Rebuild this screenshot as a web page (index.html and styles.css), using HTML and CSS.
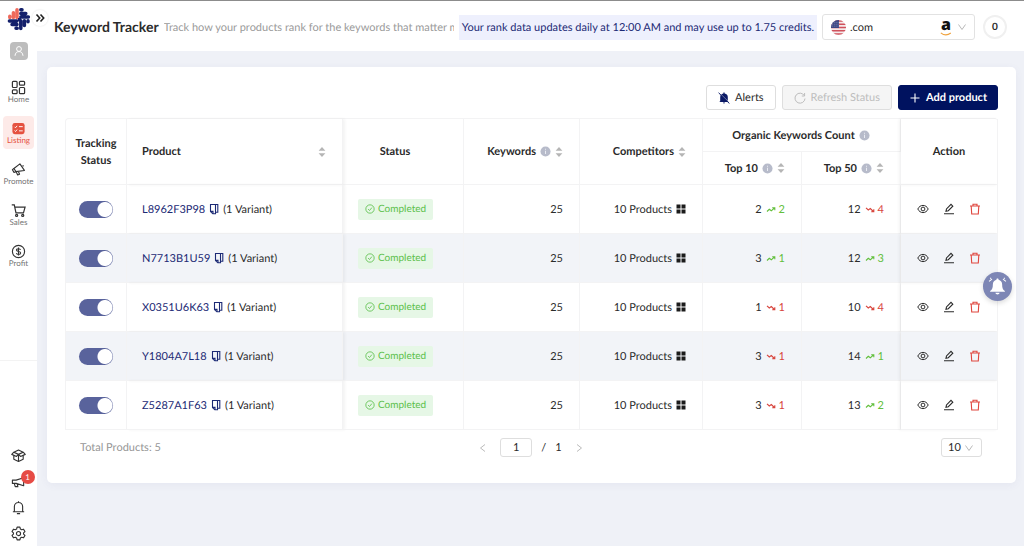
FILE: index.html
```html
<!DOCTYPE html>
<html lang="en">
<head>
<meta charset="utf-8">
<meta name="viewport" content="width=device-width, initial-scale=1">
<title>Keyword Tracker</title>
<link rel="stylesheet" href="styles.css">
</head>
<body>
<svg class="sprite" aria-hidden="true">
  <symbol id="i-copy" viewBox="0 0 10 12"><path d="M1.500 1.500h5v9.300H3.800L1.500 8.600zM6.500 1.500h2.300v7.700H6.500M1.500 8.400h2.500v2.400" fill="none" stroke="currentColor" stroke-width="1.100"/></symbol>
  <symbol id="i-info" viewBox="0 0 12 12"><circle cx="6" cy="6" r="5.500" fill="#b7bbca"/><path d="M6 5.200v3.600M6 3v1.200" stroke="#e9ebf2" stroke-width="1.100"/></symbol>
  <symbol id="i-sort" viewBox="0 0 8 12"><path d="M4 1 7.400 4.800H.6zM4 11 7.400 7.200H.6z" fill="#b5b5b5"/></symbol>
  <symbol id="i-check" viewBox="0 0 12 12"><g fill="none" stroke="currentColor" stroke-width="1"><circle cx="6" cy="6" r="5"/><path d="M3.700 6.100 5.400 7.800 8.300 4.300"/></g></symbol>
  <symbol id="i-grid" viewBox="0 0 10 10"><path d="M.5.5h4v4h-4zM5.500.5h4v4h-4zM.5 5.500h4v4h-4zM5.500 5.500h4v4h-4z" fill="#1b1b1b"/></symbol>
  <symbol id="i-up" viewBox="0 0 10 8"><path d="M1 6.500 3.300 4.300l2 1.500L8.400 3M6.200 2.800h2.600v2.400" fill="none" stroke="currentColor" stroke-width="1.100"/></symbol>
  <symbol id="i-down" viewBox="0 0 10 8"><path d="M1 2.800 3.300 5l2-1.500L8.400 6.500M6.200 6.700h2.600V4.300" fill="none" stroke="currentColor" stroke-width="1.100"/></symbol>
  <symbol id="i-eye" viewBox="0 0 12 12"><g fill="none" stroke="currentColor"><path d="M.8 6C2 3.600 3.800 2.400 6 2.400S10 3.600 11.200 6C10 8.400 8.200 9.600 6 9.600S2 8.400.8 6z"/><circle cx="6" cy="6" r="1.900"/></g></symbol>
  <symbol id="i-edit" viewBox="0 0 12 12"><path d="M3 8.200 3.500 5.900 8 1.400l1.800 1.800-4.500 4.500zM1 10.700h10" fill="none" stroke="currentColor" stroke-width="1.100"/></symbol>
  <symbol id="i-trash" viewBox="0 0 12 12"><path d="M1 3h10M4 3V1.300h4V3M2.200 3l.5 8h6.600l.5-8" fill="none" stroke="currentColor" stroke-width="1.100"/></symbol>
  <symbol id="i-chev" viewBox="0 0 10 10"><path d="M1.500 2.500 5 7.500l3.500-5" fill="none" stroke="#b9b9b9" stroke-width="1"/></symbol>
</svg>

<div class="app">
  <aside class="sidebar">
    <svg class="logo" viewBox="0 0 24 24" role="img" aria-label="Logo">
      <g fill="none" stroke-width="3.500" stroke-linecap="round">
        <path d="M2.800 9.200v1.200M6.400 5.800v4.600M10 2.800v7.600" stroke="#ef6a5b"/>
        <path d="M13.800 2.800h1.200M13.800 6.400h5M13.800 10h7.600M2.400 14h7.600M5 17.600h5M9 21.200h1.200M13.800 13.800v7.600M17.400 13.800v4.600M21 13.800v1" stroke="#14206b"/>
      </g>
      <path d="M11 11h3v3h-3z" fill="#14206b"/>
    </svg>
    <button class="expand" type="button" aria-label="Expand menu"><svg viewBox="0 0 10 10"><path d="M1.500 1.500 4.700 5 1.500 8.500M5.500 1.500 8.700 5 5.500 8.500" fill="none" stroke="#222" stroke-width="1.600"/></svg></button>
    <button class="avatar" type="button" aria-label="Account"><svg viewBox="0 0 12 12"><g fill="none" stroke="#fff" stroke-width="1"><circle cx="6" cy="4" r="2.400"/><path d="M2 10.800c.3-3 1.800-4.200 4-4.200s3.700 1.200 4 4.200"/></g></svg></button>
    <nav class="menu">
      <a href="#" class="menu-item"><svg viewBox="0 0 16 16"><g fill="none" stroke="#333" stroke-width="1.300"><rect x="1.500" y="1.500" width="5" height="6.500" rx="1"/><rect x="9" y="1.500" width="5.500" height="4" rx="1"/><rect x="1.500" y="10.500" width="5" height="4" rx="1"/><rect x="9" y="8" width="5.500" height="6.500" rx="1"/></g></svg><span>Home</span></a>
      <a href="#" class="menu-item active"><svg viewBox="0 0 16 16"><rect x="1.500" y="2" width="13" height="12" rx="2.500" fill="#e5513f"/><path d="m3.800 6.200 1 1 1.700-2M8.500 6h4M3.800 10.200l1 1 1.700-2M8.500 10.500h4" fill="none" stroke="#fff" stroke-width="1"/></svg><span>Listing</span></a>
      <a href="#" class="menu-item"><svg viewBox="0 0 16 16"><path d="m9.500 2 4.800 7-9 1.300-2.200-3.400zM3.100 6.900 1.500 8.200l1.700 2.900 2.100-.8M5.500 10.500l1.600 3.300 2-.8-1.200-2.900M12.500 3.500l.8 1.200" fill="none" stroke="#333" stroke-width="1.200" stroke-linejoin="round"/></svg><span>Promote</span></a>
      <a href="#" class="menu-item"><svg viewBox="0 0 16 16"><g fill="none" stroke="#333" stroke-width="1.300"><path d="M.8 2h2.700l1.800 8.500h8L15 4.500H4"/><circle cx="6" cy="13.300" r="1.100"/><circle cx="12.500" cy="13.300" r="1.100"/></g></svg><span>Sales</span></a>
      <a href="#" class="menu-item"><svg viewBox="0 0 16 16"><g fill="none" stroke="#333" stroke-width="1.200"><circle cx="8" cy="8" r="6.500"/><path d="M10.200 6.200C9.900 5.300 9 5 8 5c-1.200 0-2.200.5-2.200 1.500S6.800 7.800 8 8s2.300.5 2.300 1.500S9.200 11 8 11s-2-.4-2.300-1.300M8 3.700v8.600"/></g></svg><span>Profit</span></a>
    </nav>
    <div class="tools">
      <button type="button" aria-label="Courses"><svg viewBox="0 0 16 16"><path d="M3 4.500 8 2.200l5 2.300L8 6.800zM3 4.500.8 6.800 5.800 9 8 6.800 10.200 9l5-2.200L13 4.500M3 8v4l5 2.300 5-2.300V8M8 7v7" fill="none" stroke="#333" stroke-width="1.200" stroke-linejoin="round"/></svg></button>
      <button type="button" aria-label="Announcements, 1 new"><svg viewBox="0 0 16 16"><path d="M1.500 6.500h4L13.500 4v8.500l-8-2.500h-4zM3.500 10l1 3.500h2.800l-.6-3" fill="none" stroke="#333" stroke-width="1.200" stroke-linejoin="round"/></svg><span class="count">1</span></button>
      <button type="button" aria-label="Notifications"><svg viewBox="0 0 16 16"><path d="M2 12.500h12M3.600 12.500V7a4.400 4.400 0 0 1 8.800 0v5.500M6.300 14.500h3.400M8 2.600V1.200" fill="none" stroke="#333" stroke-width="1.200"/></svg></button>
      <button type="button" aria-label="Settings"><svg viewBox="0 0 16 16"><g fill="none" stroke="#333" stroke-width="1.200" stroke-linejoin="round"><path d="M6.500 1.200h3l.5 2 1.400.8 2-.6 1.500 2.600L13.400 7.400v1.200l1.500 1.400-1.500 2.600-2-.6-1.400.8-.5 2h-3l-.5-2-1.400-.8-2 .6L1.100 10l1.500-1.400V7.400L1.100 6l1.500-2.600 2 .6L6 3.200z"/><circle cx="8" cy="8" r="2.200"/></g></svg></button>
    </div>
  </aside>

  <div class="page">
    <header class="topbar">
      <h1>Keyword Tracker</h1>
      <p class="subtitle">Track how your products rank for the keywords that matter most</p>
      <p class="notice">Your rank data updates daily at 12:00 AM and may use up to 1.75 credits.</p>
      <div class="market">
        <svg class="flag" viewBox="0 0 16 16" aria-hidden="true"><clipPath id="disc"><circle cx="8" cy="8" r="8"/></clipPath><g clip-path="url(#disc)"><path d="M0 0h16v16H0z" fill="#f4e9ea"/><path d="M0 1h16M0 4.500h16M0 8h16M0 11.500h16M0 15h16" stroke="#d0515c" stroke-width="1.700"/><path d="M0 0h8.500v8.500H0z" fill="#3d4784"/><path d="M1 2.500h7M1 4.500h7M1 6.500h7" stroke="#a9aecb" stroke-width=".6" stroke-dasharray="1 1"/></g></svg>
        <select aria-label="Marketplace"><option>.com</option></select>
        <span class="amazon">a<svg viewBox="0 0 12 4" aria-hidden="true"><path d="M.8.8c3 2.500 7 2.500 10 .2" fill="none" stroke="#f0a23c" stroke-width="1.100"/></svg></span>
        <svg class="chev" aria-hidden="true"><use href="#i-chev"/></svg>
      </div>
      <button class="credits" type="button">0</button>
    </header>

    <main class="card">
      <div class="actions">
        <button class="btn" type="button"><svg viewBox="0 0 12 12"><path d="M2.200 9.200V5.300A3.800 3.800 0 0 1 5.400 1.500V.5h1.200v1a3.800 3.800 0 0 1 3.200 3.800v3.900l1 .8H1.200zM4.800 10.500h2.400L6 11.800z" fill="#0b1a66"/><path d="M1.600 1.300 11.500 11" stroke="#fff" stroke-width=".8"/><path d="M.6.800 11.400 11.500" stroke="#0b1a66" stroke-width="1"/></svg>Alerts</button>
        <button class="btn" type="button" disabled><svg viewBox="0 0 12 12"><path d="M10.300 3.600A5 5 0 1 0 11 6.500M10.600 1v3H7.800" fill="none" stroke="#bdbdbd"/></svg>Refresh Status</button>
        <button class="btn primary" type="button"><svg viewBox="0 0 12 12"><path d="M6 1.500v9M1.500 6h9" stroke="#fff" stroke-width="1.100"/></svg>Add product</button>
      </div>

      <table class="grid">
        <colgroup><col class="c-track"><col><col class="c-status"><col class="c-key"><col class="c-comp"><col class="c-top"><col class="c-top"><col class="c-act"></colgroup>
        <thead>
          <tr>
            <th rowspan="2" class="mid">Tracking Status</th>
            <th rowspan="2" class="edge-right"><div class="head spread">Product <svg class="sort"><use href="#i-sort"/></svg></div></th>
            <th rowspan="2" class="status-head">Status</th>
            <th rowspan="2"><div class="head">Keywords <svg class="info"><use href="#i-info"/></svg><svg class="sort"><use href="#i-sort"/></svg></div></th>
            <th rowspan="2"><div class="head">Competitors <svg class="sort"><use href="#i-sort"/></svg></div></th>
            <th colspan="2"><div class="head center">Organic Keywords Count <svg class="info"><use href="#i-info"/></svg></div></th>
            <th rowspan="2" class="mid edge-left">Action</th>
          </tr>
          <tr>
            <th><div class="head">Top 10 <svg class="info"><use href="#i-info"/></svg><svg class="sort"><use href="#i-sort"/></svg></div></th>
            <th><div class="head">Top 50 <svg class="info"><use href="#i-info"/></svg><svg class="sort"><use href="#i-sort"/></svg></div></th>
          </tr>
        </thead>
        <tbody id="rows"></tbody>
      </table>

      <footer class="pager">
        <span class="total">Total Products: 5</span>
        <div class="pages">
          <button type="button" aria-label="Previous page" disabled><svg viewBox="0 0 10 10"><path d="M7 1.500 2.500 5 7 8.500" fill="none" stroke="#bbb"/></svg></button>
          <input type="text" value="1" aria-label="Page">
          <span>/</span><span>1</span>
          <button type="button" aria-label="Next page" disabled><svg viewBox="0 0 10 10"><path d="M3 1.500 7.500 5 3 8.500" fill="none" stroke="#bbb"/></svg></button>
        </div>
        <div class="size"><select aria-label="Rows per page"><option>10</option></select><svg class="chev" aria-hidden="true"><use href="#i-chev"/></svg></div>
      </footer>
    </main>
  </div>
</div>
<button class="bell" type="button" aria-label="Alerts"><svg viewBox="0 0 18 18"><path d="M9 1.500c.7 0 1 .4 1 1 2.200.5 3.400 2.300 3.400 4.500 0 3.300.6 4.800 2.600 6.300v.7H2v-.7C4 11.800 4.600 10.300 4.600 7c0-2.200 1.200-4 3.400-4.500 0-.6.3-1 1-1zM7 15h4c-.2 1-1 1.600-2 1.600S7.200 16 7 15z" fill="#fff"/><path d="M1 4.200 3.800 2M17 4.200 14.200 2M2 1.500 3 .8M16 1.500 15 .8" stroke="#fff" stroke-width="1"/></svg></button>
<script src="rows.js"></script>
</body>
</html>
```
FILE: styles.css
```css
* { box-sizing: border-box; }
body { margin: 0; font-family: Lato, "Open Sans", sans-serif; font-size: 11px; line-height: 17px; color: #2b2b2b; background: #eff1f7; text-rendering: geometricPrecision; }
button, input, select { font: inherit; color: inherit; margin: 0; text-rendering: inherit; }
button { padding: 0; border: 0; background: none; }
a { text-decoration: none; }
svg { display: block; flex: none; }
p, h1 { margin: 0; }
.sprite { position: absolute; width: 0; height: 0; }

.app { display: flex; min-height: 100vh; border-top: 1px solid #8c8c8c; }

.sidebar { position: relative; flex: none; width: 37px; display: flex; flex-direction: column; align-items: center; padding: 6px 0 4px; background: #fff; }
.logo { width: 24px; height: 24px; }
.expand { position: absolute; left: 32px; top: 9px; z-index: 2; display: grid; place-items: center; width: 16px; height: 16px; border-radius: 50%; background: #fff; box-shadow: 0 0 2px rgba(0, 0, 0, .12); }
.expand svg { width: 10px; height: 10px; }
.avatar { display: grid; place-items: center; width: 18px; height: 18px; margin-top: 11px; border-radius: 4px; background: #bdbdbd; }
.avatar svg { width: 12px; height: 12px; }
.menu { display: flex; flex-direction: column; gap: 8px; margin-top: 15px; }
.menu-item { display: flex; flex-direction: column; align-items: center; width: 31px; height: 33px; padding-top: 5px; border-radius: 4px; font-size: 8px; line-height: 9px; color: #757575; }
.menu-item svg { width: 15px; height: 15px; }
.menu-item.active { background: #fdeae8; color: #e5513f; }
.tools { display: flex; flex-direction: column; gap: 8px; margin-top: auto; width: 100%; align-items: center; padding-top: 85px; border-top: 1px solid #f3f3f3; }
.tools button { position: relative; width: 18px; height: 18px; display: grid; place-items: center; }
.tools svg { width: 15px; height: 15px; }
.count { position: absolute; left: 11px; top: -2px; width: 14px; height: 14px; border-radius: 50%; background: #e64b45; color: #fff; font-size: 8px; line-height: 14px; text-align: center; }

.page { flex: 1; min-width: 0; }
.topbar { display: flex; align-items: center; height: 50px; padding: 2px 17px 0 17px; background: #fff; }
.topbar h1 { flex: none; margin-right: 5px; font-size: 14px; font-weight: 700; line-height: 20px; }
.subtitle { flex: 1; min-width: 0; margin-right: 5px; overflow: hidden; white-space: nowrap; color: #9a9a9a; }
.notice { flex: none; padding: 4px 3px; background: #eef0fd; color: #1c2a75; white-space: nowrap; }
.market { position: relative; flex: none; display: flex; align-items: center; width: 153px; height: 26px; margin: 0 8px 0 5px; border: 1px solid #e2e2e2; border-radius: 3px; }
.market select, .size select { appearance: none; width: 100%; height: 100%; border: 0; background: none; padding: 0 0 0 27px; }
.flag { position: absolute; left: 8px; width: 15px; height: 15px; }
.amazon { position: absolute; right: 21px; top: 2px; width: 14px; font: 800 16px/15px "Open Sans", sans-serif; color: #111; text-align: center; }
.amazon svg { width: 12px; height: 4px; margin: 0 auto; }
.chev { position: absolute; right: 7px; width: 10px; height: 10px; pointer-events: none; }
.credits { flex: none; width: 24px; height: 24px; border-radius: 50%; border: 2px solid #f0f0f0; font-size: 10px; font-weight: 700; line-height: 18px; }

.card { margin: 16px 8px 0 10px; padding: 18px; padding-bottom: 26px; border-radius: 5px; background: #fff; box-shadow: 0 2px 8px rgba(60, 70, 130, .06); }
.actions { display: flex; justify-content: flex-end; gap: 6px; margin-bottom: 8px; }
.btn { display: flex; align-items: center; gap: 5px; height: 25px; padding: 0 11px; border: 1px solid #dedede; border-radius: 3px; background: #fff; }
.btn svg { width: 12px; height: 12px; }
.btn:disabled { background: #f5f5f5; color: #bdbdbd; }
.btn.primary { padding: 0 10px; border-color: #00125f; background: #00125f; color: #fff; font-weight: 700; }

.grid { width: 100%; table-layout: fixed; border-collapse: separate; border-spacing: 0; border: solid #f3f3f4; border-width: 1px 0 0 1px; border-radius: 4px 4px 0 0; }
.c-track { width: 61px; }
.c-status { width: 121px; }
.c-key { width: 116px; }
.c-comp { width: 123px; }
.c-top { width: 99px; }
.c-act { width: 97px; }
.grid th, .grid td { padding: 0 16px 0 15px; border: solid #f3f3f4; border-width: 0 1px 1px 0; text-align: right; white-space: nowrap; }
.grid th { height: 33px; font-weight: 700; }
.grid td { height: 49px; }
.grid th.mid, .grid td.mid { padding: 0 5px; text-align: center; white-space: normal; }
.grid .status-head { padding-right: 31px; text-align: center; }
.grid .left { text-align: left; }
.grid .edge-right { box-shadow: 2px 0 3px rgba(0, 0, 0, .05); }
.grid .edge-left { box-shadow: -2px 0 3px rgba(0, 0, 0, .05); }
.grid tbody tr:nth-child(even) { background: #f2f4f8; }
.head { display: flex; align-items: center; justify-content: flex-end; gap: 4px; }
.head.center { justify-content: center; }
.head.spread { justify-content: space-between; }
.info { width: 11px; height: 11px; }
.sort { width: 8px; height: 12px; }
.cell { display: flex; align-items: center; justify-content: flex-end; gap: 4px; }
.cell.start { justify-content: flex-start; }
.asin { color: #1c2a75; }
.copy { color: #1c2a75; }
.copy svg { width: 10px; height: 12px; }
.cell .tiles { width: 10px; height: 10px; }
.switch { appearance: none; display: block; width: 34px; height: 17px; margin: 0 auto; border-radius: 9px; background: radial-gradient(circle at 26px 50%, #fff 7px, #59639c 8px); }
.tag { display: inline-flex; align-items: center; gap: 3px; padding: 2px 7px; border-radius: 2px; background: #e6f7e6; color: #5bbf4a; font-size: 10px; }
.tag svg { width: 10px; height: 10px; }
.trend { display: flex; align-items: center; gap: 3px; }
.trend svg { width: 10px; height: 8px; }
.trend.up { color: #62bf3c; }
.trend.down { color: #d8453d; }
.ops { display: flex; justify-content: center; gap: 14px; }
.ops svg { width: 12px; height: 12px; }
.ops .del { color: #e0463e; }

.pager { display: grid; grid-template-columns: 1fr auto 1fr; align-items: center; padding: 8px 16px 0 15px; }
.total { color: #969696; }
.pages { display: flex; align-items: center; gap: 9px; }
.pages svg { width: 10px; height: 10px; }
.pages button { width: 16px; display: grid; place-items: center; }
.pages input { width: 32px; height: 19px; padding: 0; border: 1px solid #dedede; border-radius: 3px; text-align: center; }
.size { position: relative; justify-self: end; display: flex; align-items: center; width: 41px; height: 19px; border: 1px solid #dedede; border-radius: 3px; }
.size select { padding: 0 0 0 6px; }

.bell { position: fixed; right: 12px; top: 272px; display: grid; place-items: center; width: 29px; height: 29px; border-radius: 50%; background: #7d86b5; box-shadow: 0 2px 5px rgba(0, 0, 0, .15); }
.bell svg { width: 19px; height: 19px; }
```
FILE: rows.js
```js
const products = [
  ["L8962F3P98", 2, 2, 12, -4],
  ["N7713B1U59", 3, 1, 12, 3],
  ["X0351U6K63", 1, -1, 10, -4],
  ["Y1804A7L18", 3, -1, 14, 1],
  ["Z5287A1F63", 3, -1, 13, 2]
];

const icon = (name, cls = "") => `<svg class="${cls}" aria-hidden="true"><use href="#i-${name}"/></svg>`;

const rank = (count, change) => {
  const dir = change > 0 ? "up" : "down";
  return `<div class="cell">${count}<span class="trend ${dir}">${icon(dir)}${Math.abs(change)}</span></div>`;
};

document.getElementById("rows").innerHTML = products.map(([id, top10, d10, top50, d50]) => `
  <tr>
    <td class="mid"><input class="switch" type="checkbox" role="switch" checked aria-label="Track ${id}"></td>
    <td class="edge-right"><div class="cell start"><a class="asin" href="#">${id}</a><button class="copy" type="button" aria-label="Copy ${id}">${icon("copy")}</button>(1 Variant)</div></td>
    <td class="left"><span class="tag">${icon("check")}Completed</span></td>
    <td>25</td>
    <td><div class="cell">10 Products ${icon("grid", "tiles")}</div></td>
    <td>${rank(top10, d10)}</td>
    <td>${rank(top50, d50)}</td>
    <td class="mid edge-left"><div class="ops"><button type="button" aria-label="View ${id}">${icon("eye")}</button><button type="button" aria-label="Edit ${id}">${icon("edit")}</button><button class="del" type="button" aria-label="Delete ${id}">${icon("trash")}</button></div></td>
  </tr>`).join("");
```
